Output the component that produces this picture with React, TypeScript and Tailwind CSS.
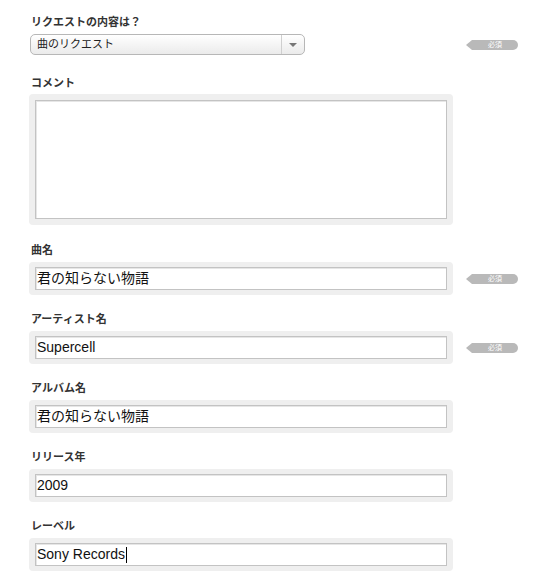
import React from "react";

const font = { fontFamily: '"Liberation Sans", "Noto Sans CJK JP", sans-serif' };

function Required() {
  return (
    <div className="ml-[13px] flex items-center">
      <span className="h-0 w-0 border-y-[5px] border-y-transparent border-r-[6px] border-r-[#b9b9b9]" />
      <span className="flex h-[10px] w-[46px] items-center justify-center rounded-r-full bg-[#b9b9b9] text-[7px] leading-none text-white">
        必須
      </span>
    </div>
  );
}

function Label({ children }: { children: React.ReactNode }) {
  return (
    <div className="mb-1 h-4 pl-[2px] text-[11px] font-bold leading-4 text-[#333]">
      {children}
    </div>
  );
}

function TextField({
  value,
  required,
  caret,
}: {
  value: string;
  required?: boolean;
  caret?: boolean;
}) {
  return (
    <div className="flex items-center">
      <div className="w-[424px] rounded-[4px] bg-[#efefef] px-[6px] py-[5px]">
        <div className="flex h-[23px] items-center border border-[#c3c3c3] bg-white pl-[1px] text-[14px] text-[#111] shadow-[inset_1px_1px_0_#e6e6e6]">
          {value}
          {caret && <span className="ml-[1px] inline-block h-[16px] w-px bg-black" />}
        </div>
      </div>
      {required && <Required />}
    </div>
  );
}

export default function App() {
  return (
    <div className="min-h-[587px] w-[560px] bg-white pl-[29px] pt-[14px]" style={font}>
      <Label>リクエストの内容は？</Label>
      <div className="flex items-center">
        <div className="w-[424px]">
          <div className="ml-[1px] flex h-[21px] w-[275px] items-center rounded-[5px] border border-[#b7b7b7] bg-gradient-to-b from-white to-[#ebebeb]">
            <span className="flex-1 pl-[6px] text-[11px] text-[#222]">曲のリクエスト</span>
            <span className="flex h-full w-[23px] items-center justify-center border-l border-[#cfcfcf]">
              <span className="h-0 w-0 border-x-[4px] border-t-[4px] border-x-transparent border-t-[#777]" />
            </span>
          </div>
        </div>
        <Required />
      </div>

      <div className="mt-[20px]">
        <div className="mb-[3px] h-4 pl-[2px] text-[11px] font-bold leading-4 text-[#333]">
          コメント
        </div>
        <div className="w-[424px] rounded-[4px] bg-[#efefef] p-[6px]">
          <div className="h-[119px] border border-[#c3c3c3] bg-white shadow-[inset_1px_1px_0_#e6e6e6]" />
        </div>
      </div>

      <div className="mt-[17px]">
        <Label>曲名</Label>
        <TextField value="君の知らない物語" required />
      </div>

      <div className="mt-4">
        <Label>アーティスト名</Label>
        <TextField value="Supercell" required />
      </div>

      <div className="mt-4">
        <Label>アルバム名</Label>
        <TextField value="君の知らない物語" />
      </div>

      <div className="mt-4">
        <Label>リリース年</Label>
        <TextField value="2009" />
      </div>

      <div className="mt-4">
        <Label>レーベル</Label>
        <TextField value="Sony Records" caret />
      </div>
    </div>
  );
}
